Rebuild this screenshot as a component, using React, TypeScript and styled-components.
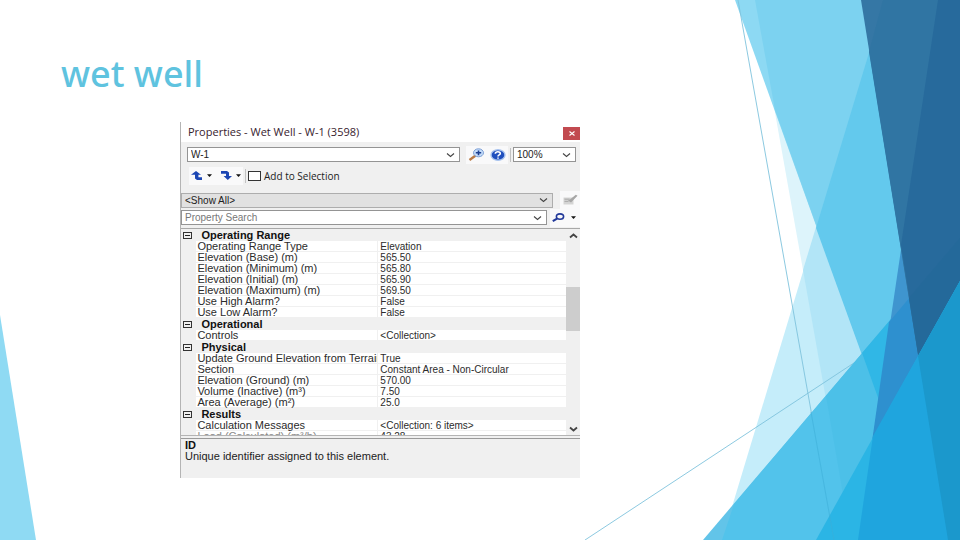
import React from "react";
import styled, { createGlobalStyle } from "styled-components";

const GlobalStyle = createGlobalStyle`
  *, *::before, *::after { box-sizing: border-box; }
  body { margin: 0; background: #fff; font-family: "Liberation Sans", Arial, sans-serif; }
  button, input, select { font: inherit; color: inherit; border: 0; padding: 0; margin: 0; background: none; border-radius: 0; }
`;

const Slide = styled.div`
  position: relative;
  min-height: 100vh;
  overflow: hidden;
`;

const Backdrop = styled.svg`
  position: absolute;
  inset: 0;
  width: 100%;
  height: 100%;
`;

const Content = styled.main`
  position: relative;
  display: grid;
  grid-template-columns: 9fr 20fr 19fr;
  padding-top: 49px;
`;

const Heading = styled.h1`
  grid-column: 1 / -1;
  margin: 0 0 23px;
  padding-left: 61px;
  font: 500 36px/50px "Noto Sans", sans-serif;
  color: #5fc3df;
`;

const Panel = styled.section`
  grid-column: 2;
  min-width: 0;
  font-size: 11px;
  color: #222;
  background: #f0f0f0;
  border-left: 1px solid #b4b4b4;
`;

const TitleBar = styled.header`
  display: flex;
  align-items: center;
  justify-content: space-between;
  height: 20px;
  padding-left: 7px;
  background: #fff;
`;

const PanelTitle = styled.h2`
  margin: 0;
  font: 400 11px/20px "Open Sans", sans-serif;
  color: #38222e;
`;

const CloseButton = styled.button`
  display: grid;
  place-items: center;
  width: 17px;
  height: 13px;
  margin-top: 2px;
  background: #c24a50;
`;

const Bar = styled.div<{ $pad?: string; $height: number }>`
  display: flex;
  align-items: center;
  height: ${(p) => p.$height}px;
  padding: ${(p) => p.$pad ?? "0"};
`;

const Field = styled.div<{ $width?: number; $filled?: boolean }>`
  display: grid;
  grid-template-columns: minmax(0, 1fr) 13px;
  align-items: center;
  flex: ${(p) => (p.$width ? `0 0 ${p.$width}px` : "1 1 0")};
  height: 15px;
  border: 1px solid ${(p) => (p.$filled ? "#adadad" : "#949494")};
  background: ${(p) => (p.$filled ? "#e1e1e1" : "#fff")};
  font-size: 10px;

  select, input {
    grid-area: 1 / 1 / 2 / 3;
    appearance: none;
    width: 100%;
    height: 13px;
    padding-left: 3px;
    line-height: 13px;
    outline: 0;
  }
  input::placeholder { color: #777; opacity: 1; }
  svg { grid-area: 1 / 2; pointer-events: none; }
`;

const Tools = styled.div<{ $gap?: number; $margin?: string }>`
  display: flex;
  align-items: center;
  justify-content: center;
  gap: ${(p) => p.$gap ?? 0}px;
  height: 18px;
  padding: 0 2px;
  margin: ${(p) => p.$margin ?? "0"};
  background: #f9f9fa;
`;

const ToolButton = styled.button`
  display: flex;
  align-items: center;
  gap: 4px;
`;

const Separator = styled.span`
  width: 1px;
  height: 14px;
  margin: 0 2px;
  background: #c2c2c2;
`;

const CheckLabel = styled.label`
  display: flex;
  align-items: center;
  gap: 3px;
  font: 400 10px/14px "Open Sans", sans-serif;

  input {
    appearance: none;
    width: 13px;
    height: 10px;
    border: 1px solid #333;
    background: #fff;
  }
`;

const GridArea = styled.div`
  display: grid;
  grid-template-columns: minmax(0, 1fr) 14px;
  grid-template-rows: minmax(0, 1fr);
  height: 208px;
  overflow: hidden;
  border-top: 1px solid #a8a8a8;
  border-bottom: 1px solid #b4b4b4;
`;

const Table = styled.table`
  width: 100%;
  height: 0;
  table-layout: fixed;
  border-collapse: collapse;
  line-height: 11px;

  th, td {
    padding: 0;
    text-align: left;
    font-weight: 400;
    white-space: nowrap;
    overflow: hidden;
  }
`;

const CategoryRow = styled.tr`
  height: 12px;
  th { padding-left: 5px; font-weight: 700; color: #111; background: #f0f0f0; }
  td { background: #f0f0f0; }
`;

const PropertyRow = styled.tr<{ $muted?: boolean }>`
  height: 11px;
  color: ${(p) => (p.$muted ? "#8a8a8a" : "#2b2b2b")};
  th, td { background: #fff; box-shadow: inset 0 -1px #f0f0f0; }
  th { padding-left: 1px; }
  td { padding-left: 3px; font-size: 10px; }
  td:first-child { background: #f0f0f0; }
  td:last-child { color: #2b2b2b; box-shadow: inset 1px -1px #f0f0f0; }
`;

const Expander = styled.button`
  display: grid;
  place-items: center;
  width: 9px;
  height: 7px;
  margin-left: 2px;
  border: 1px solid #333;

  &::after { content: ""; width: 5px; height: 1px; background: #222; }
`;

const ScrollTrack = styled.div`
  display: grid;
  grid-template-rows: 13px 45fr 44px 93fr 12px;
  justify-items: center;
  align-items: center;
`;

const Thumb = styled.div`
  grid-row: 3;
  width: 100%;
  height: 100%;
  background: #cdcdcd;
`;

const ScrollButton = styled.button<{ $row: number }>`
  grid-row: ${(p) => p.$row};
  display: grid;
`;

const Description = styled.footer`
  margin-top: 2px;
  border-top: 1px solid #9a9a9a;
  padding: 1px 4px 16px;
  line-height: 11px;

  strong { display: block; color: #111; }
  p { margin: 0; }
`;

const Chevron = ({ up = false, strong = false }: { up?: boolean; strong?: boolean }) => (
  <svg width="9" height="6" viewBox="0 0 9 6" fill="none" stroke="#444" strokeWidth={strong ? 1.8 : 1.1}>
    <path d={up ? "M1 4.5 4.5 1.5 8 4.5" : "M1 1.5 4.5 4.5 8 1.5"} />
  </svg>
);

const Caret = () => (
  <svg width="5" height="3" viewBox="0 0 5 3"><path d="M0 .2h5L2.5 3z" fill="#111" /></svg>
);

const ArrowIcon = ({ down = false }: { down?: boolean }) => (
  <svg width="12" height="9" viewBox="0 0 12 9" fill="#1c46b4">
    {down ? <path d="M1 0h6l2 1.4V5h3L7.8 9 3.6 5H6V2.8H1z" /> : <path d="M5 0l5 3.8H7.4v2.4H11V9H6L4 7.6V3.8H0z" />}
  </svg>
);

const ZoomIcon = () => (
  <svg width="17" height="13" viewBox="0 0 17 13">
    <path d="M1.5 12 8 7.3" stroke="#b97a45" strokeWidth="2.4" />
    <ellipse cx="10.5" cy="4.8" rx="5" ry="4" fill="#c4dcfa" stroke="#7c9fd4" />
    <path d="M7.8 4.8h5.4M10.5 2.4v4.8" stroke="#1c3f91" strokeWidth="1.6" />
  </svg>
);

const HelpIcon = () => (
  <svg width="16" height="12" viewBox="0 0 16 12">
    <ellipse cx="8" cy="6" rx="7" ry="5.3" fill="#1f4fbd" stroke="#a9c4ef" strokeWidth="1.4" />
    <path d="M5.3 4.8C5.5 2 10.6 2.2 10.3 4.6 10.1 6 8 5.8 8 7.5M8 8.4v1.4" fill="none" stroke="#fff" strokeWidth="1.6" />
  </svg>
);

const SearchIcon = () => (
  <svg width="13" height="9" viewBox="0 0 13 9" fill="none" stroke="#22399a">
    <path d="M.8 8.2 5 5.6" strokeWidth="2" />
    <ellipse cx="8" cy="3.6" rx="3.6" ry="2.7" strokeWidth="1.6" />
  </svg>
);

const EditIcon = () => (
  <svg width="16" height="12" viewBox="0 0 16 12">
    <path d="M1.5 3.5h10v7h-10z" fill="#d4d4d4" />
    <path d="M2.5 5.2h5M2.5 7.4h4" stroke="#aaa" />
    <path d="M6 6.5 9 8.4 15.5 1.8 13.8.8 8.6 5z" fill="#a6a6a6" />
  </svg>
);

type Property = { name: string; value: string; muted?: boolean };
const groups: { title: string; items: Property[] }[] = [
  {
    title: "Operating Range",
    items: [
      { name: "Operating Range Type", value: "Elevation" },
      { name: "Elevation (Base) (m)", value: "565.50" },
      { name: "Elevation (Minimum) (m)", value: "565.80" },
      { name: "Elevation (Initial) (m)", value: "565.90" },
      { name: "Elevation (Maximum) (m)", value: "569.50" },
      { name: "Use High Alarm?", value: "False" },
      { name: "Use Low Alarm?", value: "False" },
    ],
  },
  { title: "Operational", items: [{ name: "Controls", value: "<Collection>" }] },
  {
    title: "Physical",
    items: [
      { name: "Update Ground Elevation from Terrain", value: "True" },
      { name: "Section", value: "Constant Area - Non-Circular" },
      { name: "Elevation (Ground) (m)", value: "570.00" },
      { name: "Volume (Inactive) (m³)", value: "7.50" },
      { name: "Area (Average) (m²)", value: "25.0" },
    ],
  },
  {
    title: "Results",
    items: [
      { name: "Calculation Messages", value: "<Collection: 6 items>" },
      { name: "Load (Calculated) (m³/h)", value: "43.28", muted: true },
    ],
  },
];

const facets: [string, string][] = [
  ["755,0 960,0 960,540 851,540", "#ddf4fb"],
  ["885,0 960,0 960,540 722,540", "#c5edfa"],
  ["885,0 960,0 960,540 851,540 803,270", "#b2e5f7"],
  ["735,0 960,0 960,540 929,540", "#8dd9f3"],
  ["755,0 960,0 960,540 929,540 775,110", "#7cd2f0"],
  ["885,0 960,0 960,540 929,540 816,228", "#63c9ed"],
];

const overFacets: [string, string][] = [
  ["703,540 960,238 960,540", "#62c4e9"],
  ["734,504 960,238 960,540 722,540", "#52c3eb"],
  ["826,396 960,238 960,540 851,540", "#4cc0e8"],
  ["862,353 960,238 960,540 929,540", "#30b7e6"],
  ["938,0 960,0 960,540 858,540", "#3f95cf"],
  ["889,322 960,238 960,540 858,540", "#2e90cf"],
  ["861,0 960,0 960,540 948,540", "#3577a5"],
  ["883,0 960,0 960,540 948,540 869,52", "#3075a3"],
  ["938,0 960,0 960,540 948,540 901,245", "#276a9c"],
  ["909,298 960,238 960,540 948,540", "#24699a"],
  ["816,540 960,281 960,540", "#2bb5e5"],
  ["873,436 960,281 960,540 858,540", "#1fa5de"],
  ["918,356 960,281 960,540 948,540", "#1b98cc"],
  ["0,315 36,540 0,540", "#8fdaf3"],
];

const Polygons = ({ items }: { items: [string, string][] }) => (
  <>{items.map(([points, fill]) => <polygon key={points} points={points} fill={fill} />)}</>
);

export default function App() {
  return (
    <>
      <GlobalStyle />
      <Slide>
        <Backdrop viewBox="0 0 960 540" preserveAspectRatio="none" aria-hidden="true">
          <Polygons items={facets} />
          <path d="M738 0 834 540M585 540 866 355" stroke="#7fc3dc" strokeWidth="0.9" fill="none" />
          <Polygons items={overFacets} />
          <path d="M811 412 834 540" stroke="#3eaed8" strokeWidth="0.8" opacity="0.7" />
        </Backdrop>
        <Content>
          <Heading>wet well</Heading>
          <Panel aria-label="Properties">
            <TitleBar>
              <PanelTitle>Properties - Wet Well - W-1 (3598)</PanelTitle>
              <CloseButton aria-label="Close">
                <svg width="6" height="5" viewBox="0 0 6 5"><path d="M.5.5l5 4M5.5.5l-5 4" stroke="#fff" strokeWidth="1.1" /></svg>
              </CloseButton>
            </TitleBar>
            <Bar $height={25} $pad="0 4px 0 6px">
              <Field>
                <select aria-label="Element"><option>W-1</option></select>
                <Chevron />
              </Field>
              <Tools $gap={5} $margin="0 0 0 6px">
                <ToolButton aria-label="Zoom to"><ZoomIcon /></ToolButton>
                <ToolButton aria-label="Help"><HelpIcon /></ToolButton>
              </Tools>
              <Separator />
              <Field $width={63}>
                <select aria-label="Zoom level"><option>100%</option></select>
                <Chevron />
              </Field>
            </Bar>
            <Bar $height={17} $pad="0 0 0 8px">
              <Tools $gap={8}>
                <ToolButton aria-label="Previous"><ArrowIcon /><Caret /></ToolButton>
                <ToolButton aria-label="Next"><ArrowIcon down /><Caret /></ToolButton>
              </Tools>
              <Separator />
              <CheckLabel><input type="checkbox" />Add to Selection</CheckLabel>
            </Bar>
            <Bar $height={9} />
            <Bar $height={14}>
              <Field $filled>
                <select aria-label="Filter"><option>&lt;Show All&gt;</option></select>
                <Chevron />
              </Field>
              <Tools $margin="0 0 0 7px"><ToolButton aria-label="Edit"><EditIcon /></ToolButton></Tools>
            </Bar>
            <Bar $height={21}>
              <Field>
                <input aria-label="Property search" placeholder="Property Search" />
                <Chevron />
              </Field>
              <Tools $margin="0 0 0 3px">
                <ToolButton aria-label="Search"><SearchIcon /></ToolButton>
                <ToolButton aria-label="Search options"><Bar as="span" $height={9} $pad="0 2px 0 6px"><Caret /></Bar></ToolButton>
              </Tools>
            </Bar>
            <GridArea>
              <Table>
                <colgroup><col style={{ width: "4%" }} /><col style={{ width: "47%" }} /><col /></colgroup>
                <tbody>
                  {groups.map((group) => (
                    <React.Fragment key={group.title}>
                      <CategoryRow>
                        <td><Expander aria-label={`Collapse ${group.title}`} /></td>
                        <th colSpan={2}>{group.title}</th>
                      </CategoryRow>
                      {group.items.map((item) => (
                        <PropertyRow key={item.name} $muted={item.muted}>
                          <td />
                          <th scope="row">{item.name}</th>
                          <td>{item.value}</td>
                        </PropertyRow>
                      ))}
                    </React.Fragment>
                  ))}
                </tbody>
              </Table>
              <ScrollTrack>
                <ScrollButton $row={1} aria-label="Scroll up"><Chevron up strong /></ScrollButton>
                <Thumb />
                <ScrollButton $row={5} aria-label="Scroll down"><Chevron strong /></ScrollButton>
              </ScrollTrack>
            </GridArea>
            <Description>
              <strong>ID</strong>
              <p>Unique identifier assigned to this element.</p>
            </Description>
          </Panel>
        </Content>
      </Slide>
    </>
  );
}
